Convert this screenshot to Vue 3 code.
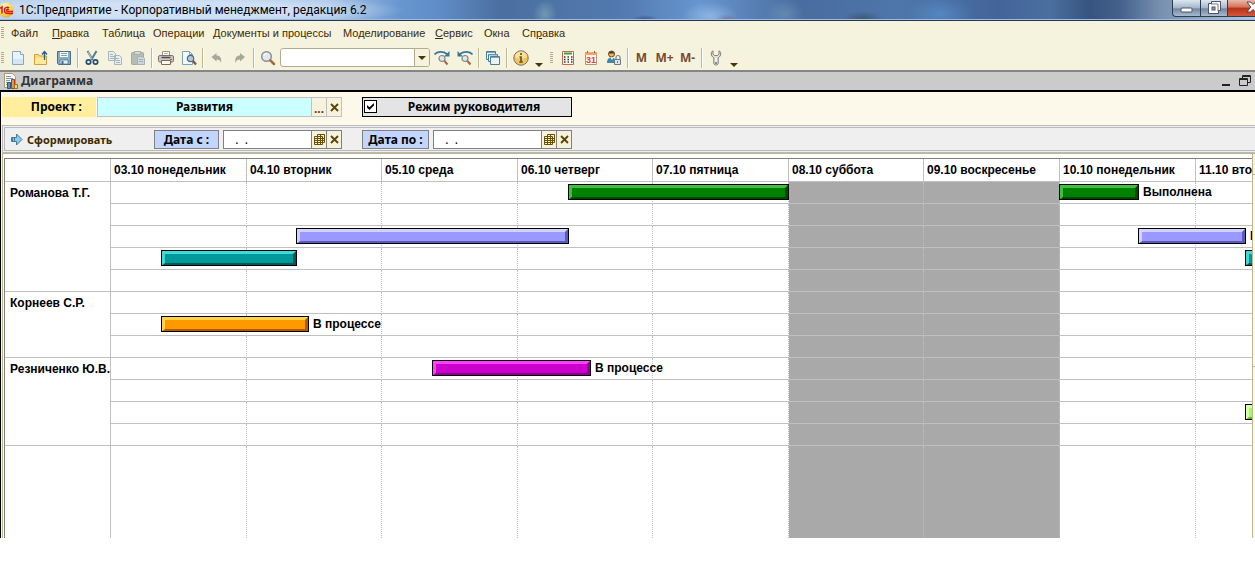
<script setup>
import { ref } from 'vue'

const menu = [
  { pre: 'Файл', key: '', post: '' },
  { pre: '', key: 'П', post: 'равка' },
  { pre: 'Таблица', key: '', post: '' },
  { pre: 'Операции', key: '', post: '' },
  { pre: 'Документы и процессы', key: '', post: '' },
  { pre: 'Моделирование', key: '', post: '' },
  { pre: '', key: 'С', post: 'ервис' },
  { pre: 'Окна', key: '', post: '' },
  { pre: 'Сп', key: 'р', post: 'авка' },
]

const project = ref('Развития')
const managerMode = ref(true)
const dateFrom = ref('  .  .')
const dateTo = ref('  .  .')
const search = ref('')

const days = [
  { label: '03.10 понедельник', width: 136 },
  { label: '04.10 вторник', width: 135 },
  { label: '05.10 среда', width: 136 },
  { label: '06.10 четверг', width: 135 },
  { label: '07.10 пятница', width: 136 },
  { label: '08.10 суббота', width: 135, off: true },
  { label: '09.10 воскресенье', width: 136, off: true },
  { label: '10.10 понедельник', width: 136 },
  { label: '11.10 вторник', width: 136 },
]

const people = [
  { name: 'Романова Т.Г.', lines: 5 },
  { name: 'Корнеев С.Р.', lines: 3 },
  { name: 'Резниченко Ю.В.', lines: 4 },
]

const rowHeight = 22
const tasks = [
  { row: 0, start: 458, length: 221, color: 'green' },
  { row: 0, start: 949, length: 80, color: 'green', status: 'Выполнена' },
  { row: 2, start: 186, length: 273, color: 'lilac' },
  { row: 2, start: 1028, length: 108, color: 'lilac', status: 'В процессе' },
  { row: 3, start: 51, length: 136, color: 'teal' },
  { row: 3, start: 1135, length: 120, color: 'teal' },
  { row: 6, start: 51, length: 148, color: 'orange', status: 'В процессе' },
  { row: 8, start: 322, length: 159, color: 'magenta', status: 'В процессе' },
  { row: 10, start: 1135, length: 120, color: 'lime' },
]
</script>

<template>
  <div class="window">
    <header class="titlebar">
      <svg class="logo" width="16" height="18" viewBox="0 0 16 18">
        <defs>
          <radialGradient id="lg" cx=".4" cy=".3" r=".8">
            <stop offset="0" stop-color="#fffbd0" /><stop offset=".6" stop-color="#ffd84a" /><stop offset="1" stop-color="#e39a1c" />
          </radialGradient>
        </defs>
        <circle cx="6" cy="9" r="7.500" fill="url(#lg)" />
        <path d="M0 7.500L2 6v6.500M9 7C7.500 5.600 4.400 6 4.400 9s2 3.500 3.600 3.500h5M8.800 8.800C7.800 7.900 6.600 8.200 6.600 9.200s1 1.300 2 1.300h4.400" fill="none" stroke="#d8161c" stroke-width="1.500" />
      </svg>
      <h1>1С:Предприятие - Корпоративный менеджмент, редакция 6.2</h1>
      <div class="winbuttons">
        <button type="button" aria-label="Свернуть" class="wmin">
          <svg width="13" height="6" viewBox="0 0 13 6"><rect x="1" y="1" width="11" height="4" rx="1" fill="#fff" stroke="#4a5568" /></svg>
        </button>
        <button type="button" aria-label="Развернуть" class="wmax">
          <svg width="13" height="13" viewBox="0 0 13 13"><path d="M3.500.5h9v9h-2v3h-10v-10h3z" fill="#fff" stroke="#4a5568" /><path d="M3 3h7v7" fill="none" stroke="#4a5568" stroke-width=".8" /><rect x="4" y="6" width="3" height="3" fill="#8ba3bd" stroke="#4a5568" /></svg>
        </button>
        <button type="button" aria-label="Закрыть" class="wclose">
          <svg width="14" height="12" viewBox="0 0 14 12"><path d="M1 1h3.500L7 3.500 9.500 1H13L9.300 6 13 11H9.500L7 8.500 4.500 11H1l3.700-5z" fill="#fff" stroke="#5b3d4a" /></svg>
        </button>
      </div>
    </header>

    <nav class="menubar" aria-label="Главное меню">
      <span class="grip"></span>
      <button v-for="(m, i) in menu" :key="i" type="button">{{ m.pre }}<u v-if="m.key">{{ m.key }}</u>{{ m.post }}</button>
    </nav>

    <div class="toolbar">
      <span class="grip"></span>
      <button type="button" aria-label="Новый">
        <svg viewBox="0 0 16 16"><path d="M2.500 1.500h8l3 3v10h-11z" fill="#e9f3fb" stroke="#8aa5bd" /><path d="M3 9h10v5H3z" fill="#d3e6f5" /><path d="M10.500 1.500v3h3" fill="#fff" stroke="#8aa5bd" /></svg>
      </button>
      <button type="button" aria-label="Открыть">
        <svg viewBox="0 0 16 16"><path d="M1.500 14.500v-10h4l1 1.500h7v8.500z" fill="#fbdc7c" stroke="#d2a03c" /><path d="M2 14V9l2-1h9v6z" fill="#ffe99f" /><path d="M11.500 10V2M9 4.500L11.500 1.500 14 4.500" fill="none" stroke="#2e5d7d" stroke-width="1.300" /></svg>
      </button>
      <button type="button" aria-label="Сохранить">
        <svg viewBox="0 0 16 16"><path d="M1.500 1.500h13v13h-12l-1-1z" fill="#87abc5" stroke="#48708e" /><path d="M4 2h8v5H4z" fill="#f5fafc" /><path d="M5 3.500h6M5 5.500h6" stroke="#7ca7a0" /><path d="M4 10h8v4H4z" fill="#e4edf2" stroke="#48708e" stroke-width=".7" /><path d="M5.500 11h2v3h-2z" fill="#48708e" /></svg>
      </button>
      <i class="sep"></i>
      <button type="button" aria-label="Вырезать">
        <svg viewBox="0 0 16 16"><path d="M3.500 1l5.300 9M12.500 1L7.200 10" stroke="#587993" stroke-width="2" /><path d="M4 2l4 7" stroke="#dbe7ee" stroke-width=".7" /><circle cx="4.500" cy="12" r="2.200" fill="none" stroke="#264d70" stroke-width="1.700" /><circle cx="11.500" cy="12" r="2.200" fill="none" stroke="#264d70" stroke-width="1.700" /></svg>
      </button>
      <button type="button" aria-label="Копировать">
        <svg viewBox="0 0 16 16"><g stroke="#a5b8bd" fill="#e8eef0"><path d="M1.500 1.500h5l2 2v7h-7zM7.500 5.500h5l2 2v7h-7z" /><path d="M3 4.500h3M3 6.500h4M3 8.500h4M9 8.500h3M9 10.500h4M9 12.500h4" /></g></svg>
      </button>
      <button type="button" aria-label="Вставить">
        <svg viewBox="0 0 16 16"><rect x="1.500" y="2.500" width="12" height="12" rx="1" fill="#b6bcb6" stroke="#a2aaa6" /><path d="M4.500 1.500h6v3h-6z" fill="#dadbd0" stroke="#a6ada6" /><path d="M7.500 6.500h5l2 2v6h-7z" fill="#cbd6da" stroke="#a2b2b8" /><path d="M9 9.500h4M9 11.500h4" stroke="#a2b2b8" /></svg>
      </button>
      <i class="sep"></i>
      <button type="button" aria-label="Печать">
        <svg viewBox="0 0 16 16"><path d="M4.500 6V1.500h7V6" fill="#fff" stroke="#a08e84" /><path d="M6 3.500h4" stroke="#c5b7ad" /><rect x=".5" y="5.500" width="15" height="6.500" rx="1.500" fill="#c9c6c6" stroke="#77716f" /><path d="M3.500 7.500h9" stroke="#514b4a" stroke-width="1.500" /><path d="M12 9.500h2" stroke="#d25134" /><path d="M3.500 10.500h9v4h-9z" fill="#fdf8e5" stroke="#786b63" /></svg>
      </button>
      <button type="button" aria-label="Предварительный просмотр">
        <svg viewBox="0 0 16 16"><path d="M1.500 1.500h7l3 3v10h-10z" fill="#f5fafd" stroke="#7ba3bf" /><path d="M8.500 1.500v3h3" fill="none" stroke="#7ba3bf" /><circle cx="9.500" cy="8.500" r="3.200" fill="#a8cbdf" stroke="#4e6b7d" stroke-width="1.200" /><path d="M12 11l3 3.500" stroke="#80513d" stroke-width="2.200" /></svg>
      </button>
      <i class="sep"></i>
      <button type="button" aria-label="Отменить">
        <svg viewBox="0 0 16 16"><path d="M2.500 7l5-4v2.500c3.500 0 5.500 2.500 4.500 7.500-.5-2.500-2-3.500-4.500-3.500V11.500z" fill="#a2ab9b" /></svg>
      </button>
      <button type="button" aria-label="Вернуть">
        <svg viewBox="0 0 16 16"><path d="M13 7L8 3v2.500C4.500 5.500 2.500 8 3.500 13c.5-2.500 2-3.500 4.500-3.500V11.500z" fill="#a2ab9b" /></svg>
      </button>
      <i class="sep"></i>
      <button type="button" aria-label="Найти">
        <svg viewBox="0 0 16 16"><circle cx="6.500" cy="6.500" r="4.800" fill="#dfe9ef" stroke="#8e8f94" stroke-width="1.500" /><path d="M4 6a3 3 0 013-2.500" fill="none" stroke="#fff" /><path d="M10.300 10.300l3.700 3.700" stroke="#a76848" stroke-width="2.500" stroke-linecap="round" /></svg>
      </button>
      <div class="combo">
        <input v-model="search" aria-label="Строка поиска" type="text" />
        <button type="button" aria-label="Список"><b class="tri"></b></button>
      </div>
      <button type="button" aria-label="Найти следующий">
        <svg viewBox="0 0 16 16"><path d="M.500 4.500C3 1.200 9 1 13 4" fill="none" stroke="#35789b" stroke-width="1.600" /><path d="M15.500 1v5.500H10z" fill="#35789b" /><circle cx="8" cy="8.500" r="3" fill="#d8e6ee" stroke="#8d8580" stroke-width="1.200" /><path d="M10.500 11l3 3.500" stroke="#a76848" stroke-width="2" /></svg>
      </button>
      <button type="button" aria-label="Найти предыдущий">
        <svg viewBox="0 0 16 16"><path d="M15.500 4.500C13 1.200 7 1 3 4" fill="none" stroke="#35789b" stroke-width="1.600" /><path d="M.500 1v5.500H6z" fill="#35789b" /><circle cx="8" cy="8.500" r="3" fill="#d8e6ee" stroke="#8d8580" stroke-width="1.200" /><path d="M10.500 11l3 3.500" stroke="#a76848" stroke-width="2" /></svg>
      </button>
      <i class="sep"></i>
      <button type="button" aria-label="Окна">
        <svg viewBox="0 0 16 16"><g fill="#eaf3f8" stroke="#4c7c9b"><path d="M1.500 1.500h9v8h-9z" /><path d="M3.500 4.500h9v7h-9z" /><path d="M5.500 6.500h9v8h-9z" /></g><path d="M2 2.500h8M4 5h8M6 7.500h8" stroke="#79a6c0" stroke-width="1" /></svg>
      </button>
      <i class="sep"></i>
      <button type="button" aria-label="Справка">
        <svg viewBox="0 0 16 16"><circle cx="8" cy="8" r="7.200" fill="#f6c25e" stroke="#7b705f" /><path d="M2 7a6 5.500 0 0112 0c-3 2-9 2-12 0z" fill="#fbdf9c" /><path d="M8 3v2M6.500 7H8v5M6.300 12h3.500" fill="none" stroke="#526027" stroke-width="1.700" /></svg>
      </button>
      <button type="button" class="more" aria-label="Другие кнопки"><b class="tri"></b></button>
      <span class="grip second"></span>
      <button type="button" aria-label="Калькулятор">
        <svg viewBox="0 0 16 16"><path d="M2.500 1.500h11v13h-11z" fill="#fdf9ed" stroke="#c7694c" /><path d="M4 3.500h8" stroke="#3f9e38" stroke-width="2" /><path d="M4 7h1.500M7.500 7H9M11 7h1.500M4 9.500h1.500M7.500 9.500H9M11 9.500h1.500M4 12h1.500M7.500 12H9M11 12h1.500" stroke="#333" stroke-width="1.500" /></svg>
      </button>
      <button type="button" aria-label="Календарь">
        <svg viewBox="0 0 16 16"><path d="M2.500 2.500h11v12h-11z" fill="#fffaf0" stroke="#a79881" /><path d="M2 2h12v3H2z" fill="#f1a268" /><path d="M4.500 1v2M11.500 1v2" stroke="#8b6546" /><text x="8" y="13" text-anchor="middle" font-family="Liberation Sans, sans-serif" font-size="9" font-weight="bold" fill="#e0432c">31</text></svg>
      </button>
      <button type="button" aria-label="Пользователи">
        <svg viewBox="0 0 16 16"><circle cx="5.500" cy="4" r="3" fill="#f0b355" stroke="#704b2b" /><path d="M2.600 3.500a3 3 0 015.800 0z" fill="#50341f" /><path d="M1 13c0-4 2-5.500 4.500-5.500S10 9 10 13z" fill="#3e88aa" /><path d="M4.500 7.500L6 10l1.500-2.500z" fill="#fff" /><path d="M10 10V7.500a2 2 0 014 0V10" fill="none" stroke="#77848d" stroke-width="1.200" /><path d="M8.500 9.500h6v5h-6z" fill="#dce3e7" stroke="#6c7b86" /><path d="M11.500 11v2" stroke="#6c7b86" /></svg>
      </button>
      <i class="sep"></i>
      <button type="button" class="mem">M</button>
      <button type="button" class="mem">M+</button>
      <button type="button" class="mem">M-</button>
      <i class="sep"></i>
      <button type="button" aria-label="Настройка">
        <svg viewBox="0 0 16 16"><path d="M5 .8C2.600 2 2.500 6 5.800 7.700V13.200c0 2.400 4.400 2.400 4.400 0V7.700C13.500 6 13.400 2 11 .8V4.200L9.500 5.500h-3L5 4.200z" fill="#e2e2dd" stroke="#7e7e79" /><path d="M8 8v4" stroke="#fff" /><circle cx="8" cy="13" r="1" fill="#6e6e6a" /></svg>
      </button>
      <button type="button" class="more" aria-label="Другие кнопки"><b class="tri"></b></button>
    </div>

    <div class="doctitle">
      <svg width="16" height="16" viewBox="0 0 16 16"><path d="M1.500.5h8l3 3v11h-11z" fill="#f6f9fb" stroke="#b59a5b" /><path d="M3 3.500h5M3 5.500h7M3 7.500h4M3 9.500h3M3 11.500h2" stroke="#7b9ab0" /><path d="M4.500 9.500h3v6h-3z" fill="#4f94b9" stroke="#235a7a" /><path d="M8.500 6.500h3v9h-3z" fill="#f08c4c" stroke="#a3401e" /><path d="M11.500 11.500h3v4h-3z" fill="#f8cf52" stroke="#9c7420" /></svg>
      <h2>Диаграмма</h2>
      <button type="button" aria-label="Свернуть окно"><svg width="12" height="12" viewBox="0 0 12 12"><path d="M2 10h8" stroke="#222" stroke-width="2" /></svg></button>
      <button type="button" aria-label="Восстановить окно"><svg width="12" height="12" viewBox="0 0 12 12"><path d="M3.500 3.500v-3h8v7h-3M3 1.500h9M.5 3.500h8v7h-8zM0 4.500h9" fill="none" stroke="#222" /></svg></button>
    </div>

    <main class="form">
      <div class="row">
        <label class="project-label" for="project">Проект :</label>
        <div class="field project">
          <input id="project" v-model="project" type="text" />
          <button type="button" aria-label="Выбрать" class="dots">...</button>
          <button type="button" aria-label="Очистить"><svg width="9" height="9" viewBox="0 0 9 9"><path d="M1 1l7 7M8 1L1 8" stroke="#5d4300" stroke-width="1.800" /></svg></button>
        </div>
        <label class="mode">
          <input v-model="managerMode" type="checkbox" />
          <span>Режим руководителя</span>
        </label>
      </div>

      <div class="commands">
        <button type="button" class="build">
          <svg width="13" height="13" viewBox="0 0 13 13"><path d="M1.500 4.500h5v-3.500L12 6.500 6.500 12V8.500h-5z" fill="#8cc9e8" stroke="#43799c" /><path d="M2.500 4v5M4.500 4v5" stroke="#43799c" /></svg>
          Сформировать
        </button>
        <label class="date-label" for="from">Дата с :</label>
        <div class="field from">
          <input id="from" v-model="dateFrom" type="text" />
          <button type="button" aria-label="Календарь"><svg width="11" height="11" viewBox="0 0 11 11"><path d="M3.500 2v-1.500h7v8H9M.5 2.500h8v8h-8zM.5 4.500h10M.5 6.500h10M.5 8.500h8M3.500 2.500v8M6.500.5v10" fill="none" stroke="#6b4f00" /></svg></button>
          <button type="button" aria-label="Очистить"><svg width="9" height="9" viewBox="0 0 9 9"><path d="M1 1l7 7M8 1L1 8" stroke="#5d4300" stroke-width="1.800" /></svg></button>
        </div>
        <label class="date-label second" for="to">Дата по :</label>
        <div class="field to">
          <input id="to" v-model="dateTo" type="text" />
          <button type="button" aria-label="Календарь"><svg width="11" height="11" viewBox="0 0 11 11"><path d="M3.500 2v-1.500h7v8H9M.5 2.500h8v8h-8zM.5 4.500h10M.5 6.500h10M.5 8.500h8M3.500 2.500v8M6.500.5v10" fill="none" stroke="#6b4f00" /></svg></button>
          <button type="button" aria-label="Очистить"><svg width="9" height="9" viewBox="0 0 9 9"><path d="M1 1l7 7M8 1L1 8" stroke="#5d4300" stroke-width="1.800" /></svg></button>
        </div>
      </div>

      <div class="chart-area">
        <div class="chart">
          <table>
            <colgroup>
              <col class="names" />
              <col v-for="d in days" :key="d.label" :style="{ width: d.width + 'px' }" />
            </colgroup>
            <thead>
              <tr>
                <td></td>
                <th v-for="d in days" :key="d.label" scope="col">{{ d.label }}</th>
              </tr>
            </thead>
            <tbody v-for="p in people" :key="p.name">
              <tr v-for="n in p.lines" :key="n">
                <th v-if="n === 1" scope="rowgroup" :rowspan="p.lines">{{ p.name }}</th>
                <td v-for="d in days" :key="d.label" :class="{ off: d.off }"></td>
              </tr>
            </tbody>
            <tfoot>
              <tr>
                <td></td>
                <td v-for="d in days" :key="d.label" :class="{ off: d.off }"></td>
              </tr>
            </tfoot>
          </table>
          <div class="tasks">
            <div
              v-for="(t, i) in tasks"
              :key="i"
              class="task"
              :style="{ left: t.start + 'px', top: t.row * rowHeight + 'px' }"
            >
              <div class="bar" :class="t.color" :style="{ width: t.length + 'px' }"></div>
              <span v-if="t.status">{{ t.status }}</span>
            </div>
          </div>
        </div>
        <div class="edge"></div>
      </div>
    </main>
  </div>
</template>

<style>
body {
  background: #fff;
}
</style>

<style scoped>
* {
  box-sizing: border-box;
}
.window {
  overflow: hidden;
  font: 12px/14px "Liberation Sans", Arial, sans-serif;
  color: #000;
}
button,
input {
  font: inherit;
  color: inherit;
  margin: 0;
  padding: 0;
  border: 0;
  background: none;
  border-radius: 0;
}
button {
  display: flex;
  align-items: center;
  justify-content: center;
  white-space: nowrap;
}
input:focus {
  outline: none;
}
svg {
  display: block;
  flex: none;
}
h1,
h2 {
  margin: 0;
}

.titlebar {
  display: flex;
  height: 21px;
  border-bottom: 1px solid #26364e;
  box-shadow: inset 0 -1px #9dbbe0;
  background:
    radial-gradient(ellipse 220px 16px at 185px 10px, rgba(220, 234, 250, .7) 50%, transparent),
    radial-gradient(ellipse 12px 14px at 545px 14px, rgba(150, 190, 190, .5), transparent),
    radial-gradient(ellipse 14px 5px at 645px 20px, rgba(55, 45, 90, .6), transparent),
    radial-gradient(ellipse 28px 14px at 710px 16px, rgba(160, 195, 235, .7), transparent),
    radial-gradient(ellipse 10px 5px at 725px 19px, rgba(120, 60, 80, .6), transparent),
    radial-gradient(ellipse 20px 14px at 785px 14px, rgba(130, 170, 190, .4), transparent),
    radial-gradient(ellipse 20px 8px at 863px 19px, rgba(55, 70, 80, .6), transparent),
    radial-gradient(ellipse 34px 18px at 940px 14px, rgba(90, 150, 210, .6), transparent),
    linear-gradient(90deg, #bdd2ec 0, #a9c5e8 330px, #6796cf 400px, #5f8cc6 440px, #4b6f9f 500px, #5279b0 620px, #6796cf 700px, #4a6c9f 800px, #4e76aa 900px, #43649a 1000px, #4b6f9f 1050px, #36547f 1090px, #44618c 1120px, #7790b0 1160px, #b4c8dd 100%);
}
.logo {
  margin-top: 1px;
}
h1 {
  flex: 1;
  padding-left: 3px;
  font: 12px/20px Roboto, "Open Sans", sans-serif;
  white-space: nowrap;
}
.winbuttons {
  display: flex;
  height: 17px;
  border: 1px solid #2c3c54;
  border-width: 0 0 1px 1px;
  border-radius: 0 0 0 4px;
  background: linear-gradient(#dde7f1, #a3b5ca 50%, #75879f 55%, #a7bacf);
  overflow: hidden;
}
.wmin {
  width: 28px;
  padding-top: 3px;
  border-right: 1px solid #2c3c54;
}
.wmax {
  width: 27px;
  border-right: 1px solid #2c3c54;
  align-items: flex-start;
  padding-top: 1px;
}
.wclose {
  width: 27px;
  padding-left: 18px;
  justify-content: flex-start;
  align-items: flex-start;
  padding-top: 1px;
  background: linear-gradient(#e9b8a9, #d6705a 45%, #b92f17 50%, #d2583a);
}

.grip {
  flex: none;
  width: 3px;
  height: 12px;
  margin-left: 1px;
  background: repeating-linear-gradient(#b5aa8a 0 1px, transparent 1px 2px);
}
.menubar {
  display: grid;
  grid-template-columns: 11px 41px 50px 51px 60px 130px 92px 49px 38px 60px;
  align-items: center;
  height: 24px;
  background: #f5f2dd;
  font: 11px/14px "Liberation Sans", Arial, sans-serif;
  color: #3d2c00;
}
.menubar button {
  justify-content: flex-start;
}
.toolbar {
  display: flex;
  align-items: center;
  height: 25px;
  background: #f5f2dd;
}
.toolbar > .grip {
  margin-right: 2px;
}
.toolbar > .grip.second {
  margin: 0 3px 0 5px;
}
.toolbar > button {
  flex: none;
  width: 23px;
  height: 22px;
}
.toolbar > button > svg {
  width: 16px;
  height: 16px;
}
.toolbar > button.more {
  width: 13px;
  padding-bottom: 2px;
  align-items: flex-end;
}
.toolbar > button.mem {
  font: bold 12px/14px "Noto Sans", "Open Sans", sans-serif;
  color: #7b4a2c;
}
.sep {
  flex: none;
  width: 5px;
  height: 20px;
  background: linear-gradient(90deg, transparent 2px, #c2b994 2px 3px, #fff 3px 4px, transparent 4px);
}
.tri {
  border: 4px solid transparent;
  border-top-color: #4a3600;
  border-bottom: 0;
}
.combo {
  display: flex;
  flex: none;
  width: 150px;
  height: 19px;
  margin-left: 1px;
  border: 1px solid #b3ab8b;
  border-radius: 3px;
  background: #fff;
  overflow: hidden;
}
.combo input {
  flex: 1;
  min-width: 0;
  padding-left: 4px;
}
.combo button {
  width: 15px;
  border-left: 1px solid #b3ab8b;
  background: #f5f2dd;
}

.doctitle {
  display: flex;
  align-items: center;
  height: 22px;
  padding: 0 4px 0 3px;
  border-top: 2px solid #858585;
  border-bottom: 2px solid #000;
  background: #cbcbcb;
}
.doctitle h2 {
  flex: 1;
  padding-left: 2px;
  font: bold 12px/16px "Noto Sans", "Open Sans", sans-serif;
  color: #333;
}
.doctitle button {
  width: 12px;
  margin-left: 7px;
}

.form {
  border-left: 1px solid #000;
  padding: 5px 0 0 1px;
  background: #fcf9eb;
}
.row {
  display: flex;
  height: 20px;
  margin-bottom: 8px;
  font: bold 12px/18px "Noto Sans", "Open Sans", sans-serif;
}
.project-label {
  width: 94px;
  padding-right: 14px;
  background: #ffef9c;
  line-height: 20px;
  text-align: right;
}
.field {
  display: flex;
  border: 1px solid #808080;
  background: #fff;
}
.field input {
  flex: 1;
  min-width: 0;
  padding-left: 5px;
  white-space: pre;
}
.field button {
  flex: none;
  width: 15px;
  border-left: 1px solid #808080;
  background: #f5f2dd;
  color: #5d4300;
}
.field.project {
  width: 245px;
  margin-left: 1px;
  border-color: #c0c0c0;
  background: #cff;
}
.field.project input {
  padding: 0;
  text-align: center;
}
.field.project button {
  border-color: #c0c0c0;
}
.field button.dots {
  padding-top: 3px;
}
.mode {
  display: flex;
  width: 210px;
  margin-left: 20px;
  border: 1px solid #000;
  background: #e4e4e4;
}
.mode input {
  appearance: none;
  flex: none;
  width: 13px;
  height: 13px;
  margin: 2px 0 0 1px;
  border: 1px solid #000;
  background: #fff;
}
.mode input:checked::before {
  content: "";
  display: block;
  width: 7px;
  height: 7px;
  margin: 2px;
  background: #000;
  clip-path: polygon(0 30%, 35% 62%, 100% 0, 100% 36%, 35% 100%, 0 65%);
}
.mode span {
  flex: 1;
  text-align: center;
}

.commands {
  display: flex;
  height: 28px;
  padding: 2px 0 1px;
  border: 3px double #b9b9b9;
  border-right: 0;
  background: #efefef;
  font: 12px/17px "Noto Sans", "Open Sans", sans-serif;
}
.build {
  width: 149px;
  padding-left: 5px;
  gap: 4px;
  justify-content: flex-start;
  font: bold 11px/17px "Noto Sans", "Open Sans", sans-serif;
  color: #3d2c00;
}
.date-label {
  width: 65px;
  border: 1px solid #808080;
  background: #c1d5ff;
  font: bold 12px/17px "Noto Sans", "Open Sans", sans-serif;
  text-align: center;
}
.field.from {
  width: 119px;
  margin-left: 4px;
}
.date-label.second {
  width: 67px;
  margin-left: 20px;
}
.field.to {
  width: 139px;
  margin-left: 4px;
}

.chart-area {
  display: flex;
  border: 1px solid #bdb58e;
  border-width: 1px 0 0 1px;
  background: #fff;
}
.chart {
  position: relative;
  flex: 1;
  min-width: 0;
  margin: 4px 0 0 1px;
  border: 1px solid #808080;
  border-width: 1px 0 0 1px;
  overflow: hidden;
}
.edge {
  width: 3px;
  border-left: 1px solid #bdb58e;
  background: linear-gradient(#f5f2dd 20px, #bdb58e 20px 21px, #fcf9eb 21px 212px, #bdb58e 212px 213px, #fcf9eb 213px);
}
table {
  width: 1327px;
  border-collapse: separate;
  border-spacing: 0;
  table-layout: fixed;
}
.names {
  width: 106px;
}
th,
td {
  height: 22px;
  padding: 0;
  border-right: 1px solid #c0c0c0;
  border-bottom: 1px solid #c0c0c0;
  text-align: left;
  vertical-align: top;
  font: bold 12px/20px "Liberation Sans", Arial, sans-serif;
  white-space: nowrap;
}
thead th,
thead td {
  height: 23px;
  padding-left: 3px;
  line-height: 22px;
}
tbody th {
  padding-left: 5px;
  line-height: 22px;
}
tbody td,
tfoot td + td {
  border-right-style: dotted;
}
tfoot td {
  height: 92px;
  border-bottom: 0;
}
.off {
  background: #a9a9a9;
}
.tasks {
  position: absolute;
  top: 23px;
  left: 105px;
}
.task {
  position: absolute;
  display: flex;
  align-items: center;
  gap: 4px;
  height: 20px;
  font-weight: bold;
  line-height: 20px;
  white-space: nowrap;
}
.bar {
  flex: none;
  height: 16px;
  border: 4px solid;
  border-bottom-width: 3px;
  outline: 1px solid #000;
  outline-offset: -1px;
}
.green {
  background: #008000;
  border-color: #40c040 #004800 #004800 #40c040;
}
.lilac {
  background: #99f;
  border-color: #d2d2ff #5a5abf #5a5abf #d2d2ff;
}
.teal {
  background: #099;
  border-color: #40d8d8 #005a5a #005a5a #40d8d8;
}
.orange {
  background: #f90;
  border-color: #ffd24a #b35a00 #b35a00 #ffd24a;
}
.magenta {
  background: #c0c;
  border-color: #ff40ff #8a008a #8a008a #ff40ff;
}
.lime {
  background: #9f6;
  border-color: #d4ffa8 #5abf26 #5abf26 #d4ffa8;
}
</style>
